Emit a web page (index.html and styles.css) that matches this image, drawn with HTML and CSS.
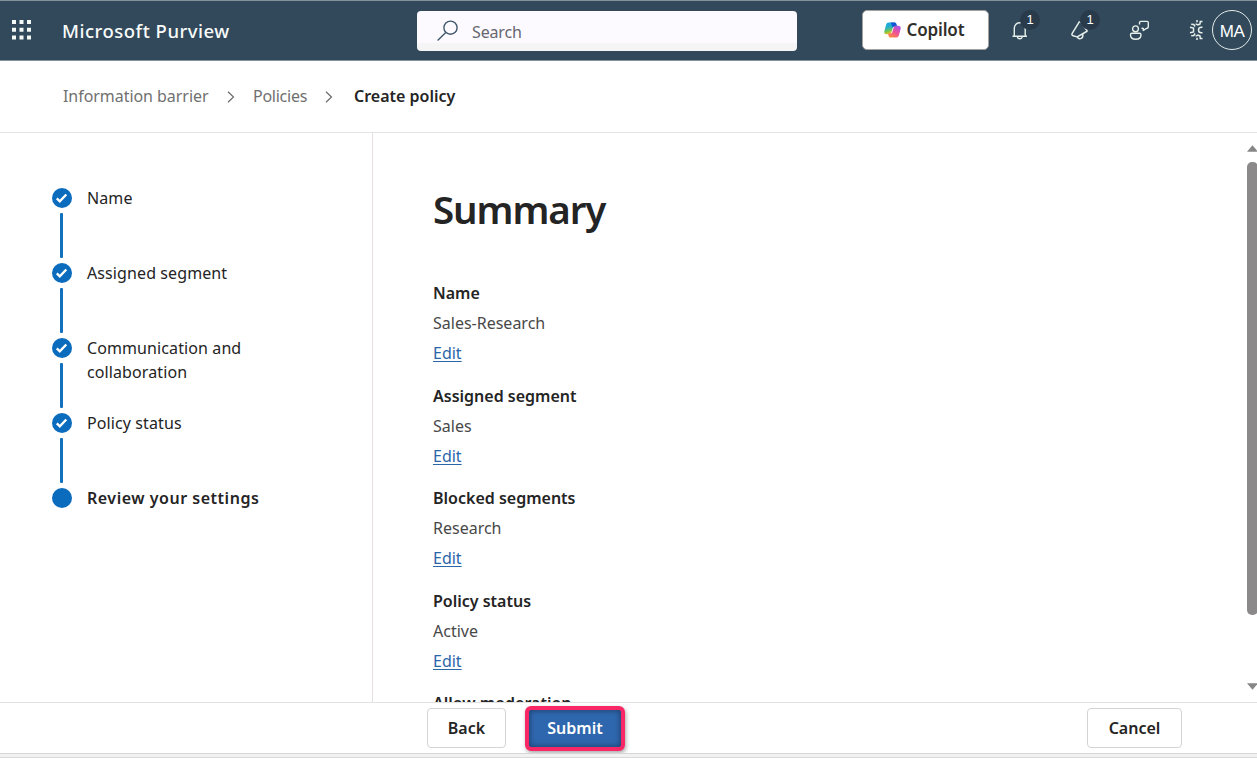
FILE: index.html
```html
<!DOCTYPE html>
<html lang="en">
<head>
<meta charset="utf-8">
<title>Create policy - Microsoft Purview</title>
<link rel="stylesheet" href="styles.css">
</head>
<body>
<div class="app">
  <header class="topbar">
    <svg class="waffle" width="20" height="20" viewBox="0 0 20 20" fill="#f4faf6"><path d="M0 0h4v4H0zM7.5 0h4v4h-4zM15 0h4v4h-4zM0 7.7h4v4H0zM7.5 7.7h4v4h-4zM15 7.7h4v4h-4zM0 15.4h4v4H0zM7.5 15.4h4v4h-4zM15 15.4h4v4h-4z"/></svg>
    <span class="brand">Microsoft Purview</span>
    <div class="search">
      <svg width="22" height="22" viewBox="0 0 22 22" fill="none" stroke="#40586c" stroke-width="1.400"><circle cx="13.500" cy="7.700" r="6.600"/><path d="M8.800 12.400L.6 20.500"/></svg>
      <span class="search-text">Search</span>
    </div>
    <button class="copilot">
      <svg width="17" height="16" viewBox="0 0 17 16">
        <defs>
          <linearGradient id="ga" x1="0" y1="0" x2=".3" y2="1"><stop offset="0" stop-color="#1aa5ea"/><stop offset=".45" stop-color="#24b0c8"/><stop offset=".75" stop-color="#74c552"/><stop offset="1" stop-color="#f2c21a"/></linearGradient>
          <linearGradient id="gb" x1=".8" y1="0" x2=".2" y2="1"><stop offset="0" stop-color="#a855e8"/><stop offset=".5" stop-color="#ee5098"/><stop offset="1" stop-color="#ff8a3c"/></linearGradient>
        </defs>
        <path d="M4.800.5h5.400c1.200 0 1.800.5 2.100 1.500l.7 2.500h-2.200c-1.200 0-1.800.5-2.100 1.500l-1.400 4.500c-.4 1.200-1.100 1.700-2.300 1.700H2.600C.7 12.200-.1 10.700.4 8.900L2 3C2.500 1.300 3.300.5 4.800.5z" fill="url(#ga)"/>
        <path d="M6.300.5h3.900c1.200 0 1.800.5 2.100 1.500l.7 2.500h-2.200c-1.100 0-1.700.4-2.100 1.300L7.500 2.500C7.200 1.300 6.900.7 6.300.5z" fill="#1458d4"/>
        <path d="M12.200 15.500H6.800c-1.200 0-1.800-.5-2.100-1.500L4 11.500h2.200c1.200 0 1.800-.5 2.100-1.500l1.400-4.500c.4-1.200 1.100-1.700 2.300-1.700h2.400c1.900 0 2.700 1.500 2.200 3.300L15 13c-.5 1.700-1.300 2.500-2.800 2.500z" fill="url(#gb)"/>
      </svg>
      <span>Copilot</span>
    </button>
    <div class="tool bell">
      <svg width="16" height="20" viewBox="0 0 16 20" fill="none" stroke="#e6efe9" stroke-width="1.400"><path d="M2.300 15.500V8a5.500 5.500 0 0 1 5.500-5.300A5.500 5.500 0 0 1 13.200 8v7.500M.5 16.200h14.500M5.300 16.500c.5 3 4.500 3 5 0"/></svg>
      <span class="badge">1</span>
    </div>
    <div class="tool horn">
      <svg width="18" height="20" viewBox="0 0 18 20" fill="none" stroke="#e6efe9" stroke-width="1.500" stroke-linejoin="round"><path d="M9.200 1.800C8 1.800 7.600 2.600 7.200 3.600L1.200 13.400c-.6 1-.3 2 .8 2.300l4.200 1.200L16.500 11M10 2.200l6.300 8.800M6.200 16.900c.8 1.800 2.500 2.200 4 1.500 1.400-.7 2-2.200 1.500-4.200"/></svg>
      <span class="badge">1</span>
    </div>
    <svg class="people" width="20" height="21" viewBox="0 0 20 21" fill="none" stroke="#e6efe9" stroke-width="1.400" stroke-linejoin="round"><circle cx="6.500" cy="8.800" r="2.900"/><path d="M2.900 13.300h7.600c1 0 1.500.5 1.500 1.500 0 2.900-2 4.500-5.300 4.500s-5.200-1.600-5.200-4.500c0-1 .4-1.500 1.400-1.500zM10.500 4.500V2.700c0-.8.500-1.300 1.300-1.300h6.200c.8 0 1.300.5 1.300 1.300v3.500c0 1.500-.7 2.300-2 2.300l-3 1.900V8.500l-1.800-.3"/></svg>
    <svg class="gear" width="14" height="22" viewBox="0 0 14 22" fill="none" stroke="#e6efe9" stroke-width="1.500"><path d="M13.500 8.200h-1.200a2.800 2.800 0 0 0 0 5.600h1.200M13.500 2.500h-2.200l-.3 2.500-1.900 1L6.600 4.900M8 1v2.200M2.200 5.200l2.600.3 1.300 2M1 8.200l3.500.9v3.800L1 13.800M6.100 14.500l-1.300 2-2.600.3M6.600 17.100L9.100 16l1.900 1 .3 2.500h2.200M8 18.800V21"/></svg>
    <div class="avatar">MA</div>
  </header>

  <nav class="crumbs">
    <span class="crumb c1">Information barrier</span>
    <svg width="8" height="12" viewBox="0 0 8 12" fill="none" stroke="#6b6b6b" stroke-width="1.200"><path d="M1 .8L6.500 6 1 11.200"/></svg>
    <span class="crumb c2">Policies</span>
    <svg width="8" height="12" viewBox="0 0 8 12" fill="none" stroke="#6b6b6b" stroke-width="1.200"><path d="M1 .8L6.500 6 1 11.200"/></svg>
    <span class="crumb current">Create policy</span>
  </nav>

  <div class="body">
    <aside class="steps">
      <div class="step"><div class="rail"><svg width="20" height="20" viewBox="0 0 20 20"><circle cx="10" cy="10" r="10" fill="#0b6cbd"/><path d="M4.800 10.300l3 3 6.500-6.800" fill="none" stroke="#fff" stroke-width="2.400"/></svg><i></i></div><span>Name</span></div>
      <div class="step"><div class="rail"><svg width="20" height="20" viewBox="0 0 20 20"><circle cx="10" cy="10" r="10" fill="#0b6cbd"/><path d="M4.800 10.300l3 3 6.500-6.800" fill="none" stroke="#fff" stroke-width="2.400"/></svg><i></i></div><span>Assigned segment</span></div>
      <div class="step"><div class="rail"><svg width="20" height="20" viewBox="0 0 20 20"><circle cx="10" cy="10" r="10" fill="#0b6cbd"/><path d="M4.800 10.300l3 3 6.500-6.800" fill="none" stroke="#fff" stroke-width="2.400"/></svg><i></i></div><span>Communication and<br>collaboration</span></div>
      <div class="step"><div class="rail"><svg width="20" height="20" viewBox="0 0 20 20"><circle cx="10" cy="10" r="10" fill="#0b6cbd"/><path d="M4.800 10.300l3 3 6.500-6.800" fill="none" stroke="#fff" stroke-width="2.400"/></svg><i></i></div><span>Policy status</span></div>
      <div class="step now"><div class="rail"><svg width="20" height="20" viewBox="0 0 20 20"><circle cx="10" cy="10" r="10" fill="#0b6cbd"/></svg></div><span>Review your settings</span></div>
    </aside>
    <main class="content">
      <h1>Summary</h1>
      <section><h2>Name</h2><p>Sales-Research</p><a>Edit</a></section>
      <section><h2>Assigned segment</h2><p>Sales</p><a>Edit</a></section>
      <section><h2>Blocked segments</h2><p>Research</p><a>Edit</a></section>
      <section><h2>Policy status</h2><p>Active</p><a>Edit</a></section>
      <section><h2>Allow moderation</h2></section>
    </main>
    <div class="scrollbar">
      <svg width="10" height="7" viewBox="0 0 10 7" fill="#868686"><path d="M0 6.800L5.500.3 11 6.800z"/></svg>
      <div class="thumb"></div>
      <svg width="10" height="7" viewBox="0 0 10 7" fill="#868686"><path d="M0 .2L5.500 6.700 11 .2z"/></svg>
    </div>
  </div>

  <footer class="actions">
    <button class="btn back">Back</button>
    <button class="btn submit">Submit</button>
    <button class="btn cancel">Cancel</button>
  </footer>
  <div class="edge"></div>
</div>
</body>
</html>
```
FILE: styles.css
```css
* { box-sizing: border-box; }
body {
  margin: 0;
  background: #fff;
  color: #242424;
  font: 16px/24px "Noto Sans", "Open Sans", sans-serif;
  overflow: hidden;
}
button { font: inherit; padding: 0; }
svg { display: block; flex: none; }
span { white-space: nowrap; }
.app { display: flex; flex-direction: column; width: 1257px; height: 758px; }

.topbar {
  display: flex;
  height: 61px;
  flex: none;
  align-items: flex-start;
  background: #32495c;
  border-top: 1px solid #84929c;
  border-bottom: 1px solid #84929c;
}
.waffle { margin: 19px 0 0 12px; }
.brand {
  width: 355px;
  margin: 17px 0 0 30px;
  color: #f8fbf9;
  font-size: 18.500px;
  font-weight: 500;
  line-height: 26px;
  letter-spacing: 0.5px;
}
.search {
  display: flex;
  width: 380px;
  height: 40px;
  margin-top: 9.500px;
  padding: 9px 0 0 20px;
  border-radius: 4px;
  background: linear-gradient(#fdfaff 32px, #f5f5f5 32px);
}
.search-text { margin-left: 13px; color: #666670; letter-spacing: -0.15px; }
.copilot {
  display: flex;
  align-items: center;
  justify-content: center;
  gap: 6px;
  width: 127px;
  height: 40px;
  margin: 9px 0 0 65px;
  padding: 0 3px 1px 0;
  border: 1px solid #a5a19e;
  border-radius: 5px;
  background: #fff;
  color: #302f2a;
  font-size: 17px;
  font-weight: 600;
  letter-spacing: -0.15px;
}
.tool { position: relative; width: 60px; }
.bell { margin: 19px 0 0 23px; }
.horn { margin: 19px 0 0 -1px; }
.badge {
  position: absolute;
  left: 8px;
  top: -10px;
  width: 20px;
  height: 20px;
  border-radius: 50%;
  background: #293a4a;
  color: #fff;
  font: 13px/20px "Liberation Sans", sans-serif;
  text-align: center;
}
.horn .badge { left: 9px; }
.people { margin: 19px 0 0 -2px; }
.gear { margin: 18px 0 0 40px; }
.avatar {
  width: 40px;
  height: 40px;
  margin: 9px 0 0 9px;
  border: 1.500px solid #e4ecea;
  border-radius: 50%;
  color: #fff;
  font: 17px/41px "Liberation Sans", sans-serif;
  letter-spacing: -0.4px;
  text-align: center;
}

.crumbs {
  display: flex;
  align-items: center;
  height: 72px;
  flex: none;
  padding: 0 0 2px 63px;
  border-bottom: 1px solid #e6e3e3;
}
.crumbs svg { margin: 3px 1px 0 -1px; }
.crumb { color: #707070; }
.c1 { width: 165px; letter-spacing: -0.05px; }
.c2 { margin-left: 17px; width: 73px; letter-spacing: -0.25px; }
.current { margin-left: 20px; color: #242424; font-weight: 600; }

.body { display: flex; height: 569px; flex: none; }
.steps { width: 373px; padding: 55px 0 0 52px; border-right: 1px solid #e6e0e1; }
.step { display: flex; height: 75px; gap: 15px; line-height: 24px; letter-spacing: 0.1px; }
.step > span { margin-top: -2px; }
.rail { display: flex; flex-direction: column; align-items: center; width: 20px; }
.rail i { width: 3px; height: 45px; margin: 5px 1px 0 0; border-radius: 1px; background: #1270bd; }
.now { font-weight: 600; letter-spacing: 0.52px; }

.content { flex: 1; padding: 48px 0 0 60px; overflow: hidden; }
h1 { margin: 0 0 41px; font-size: 38.500px; line-height: 56px; font-weight: 600; letter-spacing: -1.1px; }
section { height: 102.500px; line-height: 30px; }
h2, p { margin: 0; font-size: 16px; line-height: 30px; white-space: nowrap; }
h2 { font-weight: 600; }
p { color: #484848; }
section a { color: #2b66a8; text-decoration: underline; text-underline-offset: 2px; }
.scrollbar { display: flex; flex-direction: column; width: 10px; padding-top: 12px; }
.thumb { width: 11px; height: 453px; margin: 10px 0 68px; border-radius: 5px; background: #8b8989; }

.actions {
  display: flex;
  height: 51px;
  flex: none;
  padding-left: 427px;
  border-top: 1px solid #e2e2e2;
}
.btn {
  width: 79px;
  height: 40px;
  margin-top: 5px;
  border: 1px solid #d4d4d4;
  border-radius: 4px;
  background: #fff;
  color: #242424;
  font-weight: 600;
}
.submit {
  width: 100px;
  height: 45px;
  margin: 3px 0 0 19px;
  padding-bottom: 1px;
  border: 4px solid #fa2766;
  border-radius: 6px;
  background: #2f67ae;
  color: #fff;
  box-shadow: 1px 2px 4px rgba(0,0,0,.35), inset 0 0 6px rgba(0,0,0,.45);
}
.cancel { width: 95px; margin-left: 462px; }
.edge { height: 5px; border-top: 1px solid #d6d6d6; border-bottom: 1px solid #d9d9d9; background: #f1f1f1; }
```
